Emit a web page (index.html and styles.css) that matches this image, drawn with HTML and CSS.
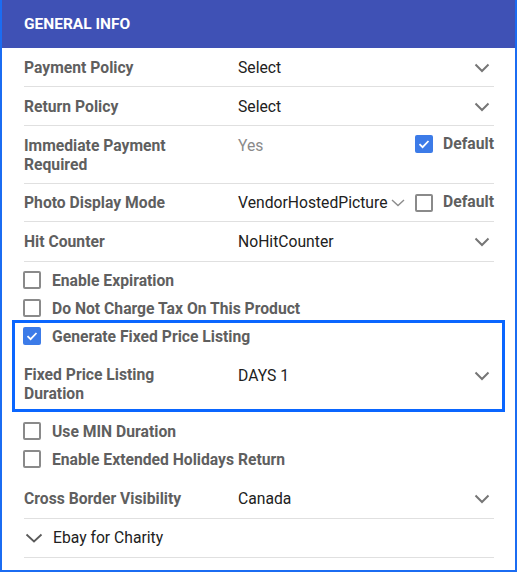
FILE: index.html
```html
<!DOCTYPE html>
<html>
<head>
<meta charset="utf-8">
<link rel="stylesheet" href="styles.css">
</head>
<body>
<div class="panel">
  <div class="header">GENERAL INFO</div>
  <div class="content">
    <div class="field r1">
      <div class="label">Payment Policy</div>
      <div class="value">Select</div>
      <svg class="chev" width="16" height="10" viewBox="0 0 16 10"><polyline points="1.5,1.5 8,8 14.5,1.5"/></svg>
    </div>
    <div class="field r1">
      <div class="label">Return Policy</div>
      <div class="value">Select</div>
      <svg class="chev" width="16" height="10" viewBox="0 0 16 10"><polyline points="1.5,1.5 8,8 14.5,1.5"/></svg>
    </div>
    <div class="field r1 top">
      <div class="label">Immediate Payment<br>Required</div>
      <div class="value muted">Yes</div>
      <div class="default">
        <span class="cb checked"><svg width="18" height="18" viewBox="0 0 18 18"><polyline points="4.5,9.2 7.6,12.2 13.5,6"/></svg></span>
        <span class="dlabel">Default</span>
      </div>
    </div>
    <div class="field r4">
      <div class="label">Photo Display Mode</div>
      <div class="value sel">VendorHostedPicture<svg class="minichev" width="14" height="8" viewBox="0 0 14 8"><polyline points="1,1 7,6.5 13,1"/></svg></div>
      <div class="default">
        <span class="cb"></span>
        <span class="dlabel">Default</span>
      </div>
    </div>
    <div class="field r5">
      <div class="label">Hit Counter</div>
      <div class="value">NoHitCounter</div>
      <svg class="chev" width="16" height="10" viewBox="0 0 16 10"><polyline points="1.5,1.5 8,8 14.5,1.5"/></svg>
    </div>

    <div class="checks first">
      <div class="check"><span class="cb"></span><span class="clabel">Enable Expiration</span></div>
      <div class="check"><span class="cb"></span><span class="clabel">Do Not Charge Tax On This Product</span></div>
    </div>

    <div class="highlight">
      <div class="check short"><span class="cb checked"><svg width="18" height="18" viewBox="0 0 18 18"><polyline points="4.5,9.2 7.6,12.2 13.5,6"/></svg></span><span class="clabel">Generate Fixed Price Listing</span></div>
      <div class="field plain duration">
        <div class="label">Fixed Price Listing<br>Duration</div>
        <div class="value days">DAYS 1</div>
        <svg class="chev" width="16" height="10" viewBox="0 0 16 10"><polyline points="1.5,1.5 8,8 14.5,1.5"/></svg>
      </div>
    </div>

    <div class="checks after">
      <div class="check"><span class="cb"></span><span class="clabel">Use MIN Duration</span></div>
      <div class="check"><span class="cb"></span><span class="clabel">Enable Extended Holidays Return</span></div>
    </div>

    <div class="field cross">
      <div class="label">Cross Border Visibility</div>
      <div class="value">Canada</div>
      <svg class="chev" width="16" height="10" viewBox="0 0 16 10"><polyline points="1.5,1.5 8,8 14.5,1.5"/></svg>
    </div>
    <div class="field ebay">
      <svg class="chev dark" width="18" height="10" viewBox="0 0 18 10"><polyline points="1.5,1.5 9,8.5 16.5,1.5"/></svg>
      <div class="ebay-label">Ebay for Charity</div>
    </div>
  </div>
</div>
</body>
</html>
```

FILE: styles.css
```css
* { box-sizing: border-box; }
html, body { margin: 0; padding: 0; background: #ffffff; }
body {
  font-family: Roboto, "Liberation Sans", Arial, sans-serif;
  font-size: 15.7px;
  line-height: 19px;
  color: #212121;
}
.panel {
  width: 517px;
  height: 572px;
  border: 2px solid #1b6cf2;
  border-top: none;
  background: #fff;
  overflow: hidden;
}
.header {
  height: 48px;
  background: #3f51b5;
  color: #ffffff;
  font-weight: 700;
  font-size: 15.5px;
  line-height: 48px;
  padding-left: 22px;
}
.content {
  padding: 0 21px 0 22px;
}
.field {
  display: flex;
  align-items: center;
  border-bottom: 1px solid #e0e0e0;
  padding: 10px 0 9px;
}
.field.top { align-items: flex-start; }
.field.r4 { padding: 9px 0 9px; }
.field.r5 { padding: 10px 0 10px; }
.label {
  width: 214px;
  flex: none;
  font-weight: 700;
  color: #5f5f5f;
}
.value {
  flex: 1;
  color: #212121;
}
.value.muted { color: #8a8a8a; }
.value.sel {
  flex: none;
  width: 177px;
  display: flex;
  align-items: center;
}
.minichev {
  margin-left: 4px;
  fill: none;
  stroke: #8c8c8c;
  stroke-width: 1.4;
}
.chev {
  flex: none;
  margin-right: 4px;
  fill: none;
  stroke: #767676;
  stroke-width: 2;
}
.chev.dark { stroke: #5a5a5a; margin-right: 0; margin-left: 1px; stroke-width: 1.8; }
.default {
  display: flex;
  align-items: center;
  gap: 10px;
  margin-left: auto;
}
.field.top .default { margin-top: -1px; }
.dlabel {
  font-weight: 700;
  color: #5f5f5f;
  margin-top: -2px;
}
.cb {
  display: inline-block;
  width: 18px;
  height: 18px;
  flex: none;
  border: 2px solid #8a8a8a;
  border-radius: 2px;
  background: #fff;
  position: relative;
}
.cb.checked {
  border: none;
  background: #3c7be8;
}
.cb svg {
  display: block;
  fill: none;
  stroke: #ffffff;
  stroke-width: 1.8;
}
.checks.first { padding-top: 4px; }
.checks.after { margin-top: 5px; }
.check {
  display: flex;
  align-items: center;
  height: 28px;
  padding-left: 0;
}
.check .cb { margin-left: -1px; }
.check.short { height: 26px; }
.clabel {
  margin-left: 11px;
  font-weight: 700;
  color: #5f5f5f;
}
.highlight {
  margin: -2px -11px 0 -12px;
  border: 3px solid #0a66ff;
  padding: 0 8px 0 9px;
}
.field.plain { border-bottom: none; }
.field.duration {
  padding: 16px 0 6px;
  align-items: flex-start;
}
.value.days { padding-top: 1px; }
.field.duration .chev { margin-top: 6px; }
.field.cross { padding: 16px 0 10px; }
.field.ebay { padding: 9px 0 10px; }
.ebay-label {
  margin-left: 10px;
  font-weight: 400;
  color: #212121;
}
```
